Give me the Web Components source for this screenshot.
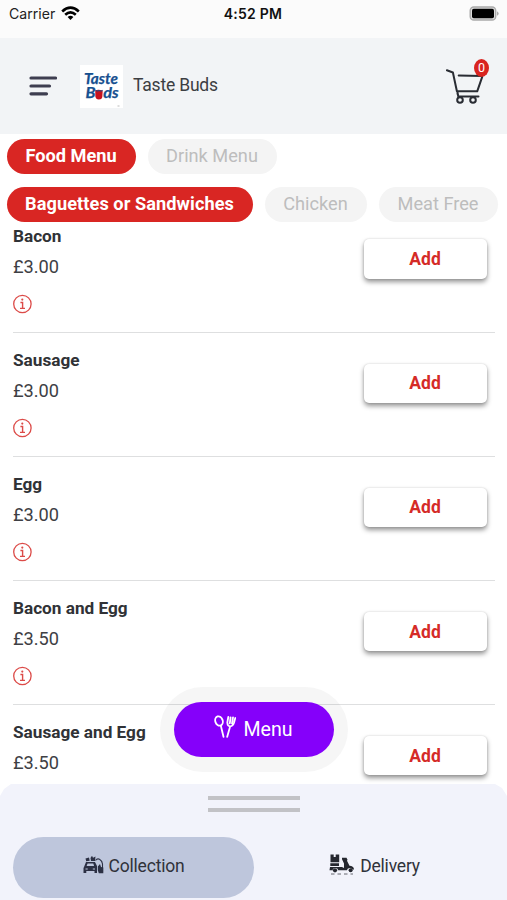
<!DOCTYPE html>
<html lang="en"><head><meta charset="utf-8"><title>Taste Buds</title>
<style>html,body{margin:0;height:100%;overflow:hidden;background:#fff;font-family:Roboto,sans-serif;color:#333539}</style>
</head><body>
<taste-app></taste-app>
<script>
const define = (name, html) => customElements.define(name, class extends HTMLElement {
  connectedCallback() {
    if (this.shadowRoot) return;
    const t = document.createElement('template');
    t.innerHTML = typeof html === 'function' ? html(this) : html;
    this.attachShadow({mode: 'open'}).append(t.content.cloneNode(true));
  }
});

define('status-bar', `<style>
:host{display:grid;grid-template-columns:1fr auto 1fr;align-items:center;height:38px;box-sizing:border-box;padding:0 7px 11px 9px;background:#fbfbfb;font:14.1px/20px Inter,sans-serif;color:#222}
.l{display:flex;align-items:center;gap:6px}
.t{font-weight:600;font-size:14px;color:#111;letter-spacing:.22px;margin-right:3px}
.r{justify-self:end;display:flex}svg{display:block}.l svg{margin-top:-1px}
</style>
<div class="l"><span>Carrier</span><svg width="19" height="15" viewBox="0 0 19 15"><g fill="none" stroke="#000" stroke-width="2.7"><path d="M1.2 5.4Q9.5-2 17.8 5.4"/><path d="M4.2 8.7Q9.5 4 14.8 8.7"/></g><path d="M6.6 11Q9.5 8.7 12.4 11L9.5 14Z"/></svg></div>
<span class="t">4:52 PM</span>
<div class="r"><svg width="31" height="15" viewBox="0 0 31 15"><rect x="1.2" y="1" width="25.5" height="13" rx="3.6" fill="#ddd" stroke="#aaa" stroke-width="1.4"/><rect x="3" y="2.8" width="22" height="9.4" rx="1.7"/><path d="M28.2 5.2Q31 7.5 28.2 9.8Z" fill="#999"/></svg></div>`);

define('brand-logo', `<style>
:host{display:block;width:43px;height:43px;background:#fff}
svg{display:block}
</style><svg width="43" height="43" viewBox="0 0 43 43"><g fill="#17508f" stroke="#17508f" stroke-width=".25" font-family="Lato,sans-serif" font-style="italic" font-weight="700" font-size="14.8"><text x="4" y="18.6" textLength="34" lengthAdjust="spacingAndGlyphs">Taste</text><text x="5.4" y="33" textLength="10" lengthAdjust="spacingAndGlyphs">B</text><text x="23.2" y="33" textLength="15.4" lengthAdjust="spacingAndGlyphs">ds</text></g><path d="M15.2 25.2q3.5-1 7.5.3l-.4 6.5q-.5 2.5-3.5 2.5t-3.4-3z" fill="#c8111d"/><path d="M15.5 25.2q1.7 1.8 3.5.3 1.7 1.5 3.6-.1" fill="none" stroke="#17508f" stroke-width="1"/><path d="M37.5 41h2" stroke="#aaa" stroke-width=".8"/></svg>`);

define('cart-icon', `<style>
:host{display:block;position:relative;width:44px;height:46px}
svg{display:block}
b{position:absolute;left:28px;top:-2px;width:15px;height:18px;border-radius:50%;background:#d9241f;color:#fff;font:12.5px/18px Roboto,sans-serif;text-align:center}
</style><svg width="44" height="46" viewBox="0 0 44 46"><g fill="none" stroke="#292c33" stroke-width="2" stroke-linecap="round" stroke-linejoin="round"><path d="M.9 9.3l6 2.2 4 18.8h20.3l5-14.5M12.7 14.4l23 .7M11.3 30.5l1 5h20.2M11.5 32.5l1 3.5"/><circle cx="14" cy="39" r="2.8"/><circle cx="27" cy="39" r="2.8"/></g></svg><b>0</b>`);

define('app-header', `<style>
:host{display:flex;align-items:center;height:96px;box-sizing:border-box;padding:0 17px 0 29px;background:#f2f4f6}
.m{display:block;margin-right:23px}
span{margin:-2px 0 0 10px;font-size:17.5px;letter-spacing:-.2px;flex:1;color:#3c3e42}
cart-icon{margin-top:-5px}
</style><svg class="m" width="28" height="22" viewBox="0 0 28 22"><path d="M2 3H26.5M2 11H20.5M2 18.8H17.5" stroke="#3e3e50" stroke-width="3.2" stroke-linecap="round"/></svg><brand-logo></brand-logo><span>Taste Buds</span><cart-icon></cart-icon>`);

define('menu-pill', `<style>
:host{display:block;box-sizing:border-box;height:35px;border-radius:18px;background:#f4f4f4;color:#bdbdbd;font-size:18.2px;line-height:34px;white-space:nowrap;text-align:center;text-indent:-1px}
:host([active]){background:#d92623;color:#fff;font-weight:700}
</style><slot></slot>`);

define('menu-tabs', `<style>
:host{display:flex;flex-direction:column;gap:13px;padding:5px 7px 0;height:88px;box-sizing:border-box}
div{display:flex;gap:12px}
</style><div><menu-pill active style="width:129px">Food Menu</menu-pill><menu-pill style="width:129px">Drink Menu</menu-pill></div>
<div><menu-pill active style="width:246px;letter-spacing:.06px">Baguettes or Sandwiches</menu-pill><menu-pill style="width:102px">Chicken</menu-pill><menu-pill style="width:119px">Meat Free</menu-pill></div>`);

define('menu-item', e => `<style>
:host{display:flex;justify-content:space-between;box-sizing:border-box;height:124.15px;flex:none;margin:0 12px 0 13px;border-bottom:1.3px solid #dedfe0}
.i{display:flex;flex-direction:column;align-items:flex-start;padding-top:15.8px}
h3{margin:0;font-size:17.2px;line-height:22px;font-weight:700;color:#303236}
p{margin:9px 0 16.4px;font-size:18.2px;line-height:22px;color:#3e4044}
svg{display:block}
button{all:unset;box-sizing:border-box;width:123px;height:39.5px;margin:30.6px 8px 0 0;border-radius:5px;background:#fff;box-shadow:0 3px 5px rgba(0,0,0,.42),0 0 2px rgba(0,0,0,.16);color:#d52b27;font-size:17.5px;line-height:36px;font-weight:700;text-align:center;text-indent:-1px}
</style><div class="i"><h3>${e.getAttribute('name')}</h3><p>${e.getAttribute('price')}</p><svg width="19" height="20" viewBox="0 0 19 20"><circle cx="9.4" cy="10" r="8.7" fill="none" stroke="#dc4b48" stroke-width="1.3"/><path d="M7.4 8.5h2.2v5.8M7 14.4h5" fill="none" stroke="#dc4b48" stroke-width="1.4"/><circle cx="9.3" cy="5.6" r="1.1" fill="#dc4b48"/></svg></div><button>Add</button>`);

define('menu-list', `<style>
:host{display:flex;flex-direction:column;flex:1;min-height:0;margin-top:-13.2px;overflow:hidden}
</style><slot></slot>`);

define('menu-fab', `<style>
:host{display:block;position:absolute;left:160px;top:687px;width:188px;height:85px;box-sizing:border-box;padding:15px 14px;border-radius:43px;background:rgba(100,100,100,.06)}
div{height:55px;border-radius:28px;background:#8500fa;color:#fff;display:flex;align-items:center;justify-content:center;gap:7px;font-size:19.6px}
svg{display:block;margin-top:-6px}span{margin-right:1px}
</style><div><svg width="22" height="24" viewBox="0 0 22 24"><g fill="none" stroke="#fff" stroke-width="1.8" stroke-linecap="round"><ellipse cx="5" cy="6" rx="3.7" ry="4.8" transform="rotate(-18 5 6)"/><path d="M6.9 11l2.6 10.8M13.2 21.8l3-10.5M14.3 2l-1 5.5q.3 4 3 3.8 2.6-.2 3.7-3.5l1.3-4.8M16.6 2.3l-.8 6M19 2.5l-1 6"/></g></svg><span>Menu</span></div>`);

define('collect-icon', `<style>:host{display:block}svg{display:block}</style>
<svg width="21" height="20" viewBox="0 0 21 20" fill="#2c3044"><path fill-rule="evenodd" d="M1 12l2-5h9l2 4v7h-2.5v-2H3.3v2H.5v-5zM3.6 11h7.5l-.8-2.5H4.6zM2.5 13.4v1.2h2.2v-1.2zm7.3 0v1.2H12v-1.2z"/><path d="M2.5 3.5L6 2.5l.7 3.2-3.5.5zM7.5 3L9 .8l1 2 2.5-1.3L12 6H8z"/><path d="M12.5 5.5Q14 3.2 16.5 4.2 19 5.5 19.5 9v8" fill="none" stroke="#2c3044" stroke-width="1.1"/><path d="M14.8 11.5L17 9l1 3 2.3.5v5.8h-4.5l-1-3z"/></svg>`);

define('scooter-icon', `<style>:host{display:block}svg{display:block}</style>
<svg width="26" height="21" viewBox="0 0 26 21" fill="#25272f"><path fill-rule="evenodd" d="M1.5.5h3.2v2.5h2V.5h3.5v7.7H1.5zM1.3 9.2H10v2.8H1.3zM1 13h12l2 1V9.5l-2-4.2V3.8h4.5l1 2-.5 1 2.5 5q4 0 4.6 3.7h-1.8q-1-1.8-3-1.5-2 .2-2.4 2.3H9.2q-.4-2.3-2.8-2.3t-3 2.3H.5z"/><circle cx="6" cy="16.3" r="2.1"/><circle cx="21.6" cy="16.3" r="2"/><path d="M2 20h3.5m3 0h3.5m3 0h3.5m3 0H24" stroke="#55575f" stroke-width=".9"/></svg>`);

define('mode-option', `<style>
:host{display:flex;align-items:center;justify-content:center;width:241px;height:61px;box-sizing:border-box;border-radius:31px;gap:5px;font-size:17.5px;letter-spacing:-.2px;color:#30323a;padding-bottom:3px}
:host([active]){background:#bec6dc}
::slotted(*){margin-top:-3px}
</style><slot name="icon"></slot><span><slot></slot></span>`);

define('bottom-sheet', `<style>
:host{display:flex;flex-direction:column;align-items:center;height:116px;box-sizing:border-box;padding-top:12px;background:#f2f3fb;clip-path:polygon(0 12px,4px 5px,11px 0,495px 0,502px 4px,507px 12px,507px 116px,0 116px)}
i{display:block;width:92px;height:4px;background:#c2c2c6;margin-bottom:8px}
div{display:flex;width:482px;margin:17px 0 0 1px}
</style><i></i><i></i><div><mode-option active><collect-icon slot="icon"></collect-icon>Collection</mode-option><mode-option><scooter-icon slot="icon"></scooter-icon>Delivery</mode-option></div>`);

define('taste-app', `<style>
:host{display:flex;flex-direction:column;position:relative;width:507px;height:900px;overflow:hidden;background:#fff}
menu-tabs{position:relative;z-index:1}status-bar,app-header,menu-tabs,bottom-sheet{flex:none}
</style><status-bar></status-bar><app-header></app-header><menu-tabs></menu-tabs>
<menu-list><menu-item name="Bacon" price="£3.00"></menu-item><menu-item name="Sausage" price="£3.00"></menu-item><menu-item name="Egg" price="£3.00"></menu-item><menu-item name="Bacon and Egg" price="£3.50"></menu-item><menu-item name="Sausage and Egg" price="£3.50"></menu-item></menu-list>
<bottom-sheet></bottom-sheet><menu-fab></menu-fab>`);
</script></body></html>
